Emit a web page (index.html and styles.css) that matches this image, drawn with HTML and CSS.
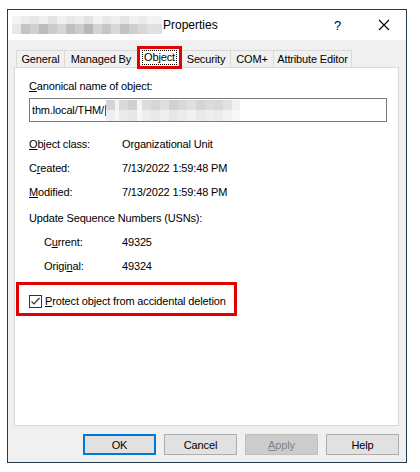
FILE: index.html
```html
<!DOCTYPE html>
<html lang="en">
<head>
    <meta charset="UTF-8">
    <title>Properties</title>
    <link rel="stylesheet" href="styles.css">
</head>
<body>

<div class="window">
    <div class="titlebar">
        <span class="blur-name"></span>
        <span class="title">Properties</span>
        <span class="help-btn">?</span>
        <span class="close-btn">
            <svg width="12" height="12" viewBox="0 0 12 12">
                <path d="M1 1 L11 11 M11 1 L1 11" stroke="#000" stroke-width="1.1" fill="none"/>
            </svg>
        </span>
    </div>

    <div class="client">
        <div class="tabs">
            <div class="tab tab-general">General</div>
            <div class="tab tab-managed">Managed By</div>
            <div class="tab tab-object active"><span class="focus">Object</span></div>
            <div class="tab tab-security">Security</div>
            <div class="tab tab-com">COM+</div>
            <div class="tab tab-attr">Attribute Editor</div>
        </div>

        <div class="panel">
            <div class="label-top"><u>C</u>anonical name of object:</div>
            <div class="textbox">
                <span>thm.local/THM/</span><span class="cursor-bit"></span><span class="blur-path"></span>
            </div>

            <div class="row">
                <span class="key"><u>O</u>bject class:</span>
                <span class="val">Organizational Unit</span>
            </div>
            <div class="row">
                <span class="key">C<u>r</u>eated:</span>
                <span class="val">7/13/2022 1:59:48 PM</span>
            </div>
            <div class="row">
                <span class="key"><u>M</u>odified:</span>
                <span class="val">7/13/2022 1:59:48 PM</span>
            </div>
            <div class="row usn">Update Sequence Numbers (USNs):</div>
            <div class="row sub">
                <span class="key">C<u>u</u>rrent:</span>
                <span class="val">49325</span>
            </div>
            <div class="row sub">
                <span class="key">Origi<u>n</u>al:</span>
                <span class="val">49324</span>
            </div>

            <div class="protect">
                <span class="checkbox">
                    <svg width="11" height="11" viewBox="0 0 11 11">
                        <path d="M1.5 5.5 L4 8 L9.5 2" stroke="#333" stroke-width="1.2" fill="none"/>
                    </svg>
                </span>
                <span><u>P</u>rotect object from accidental deletion</span>
            </div>
        </div>

        <div class="buttons">
            <button class="btn default">OK</button>
            <button class="btn">Cancel</button>
            <button class="btn disabled"><u>A</u>pply</button>
            <button class="btn">Help</button>
        </div>
    </div>
</div>

</body>
</html>
```

FILE: styles.css
```css
* {
    box-sizing: border-box;
}

body {
    margin: 0;
    background: #fff;
    font-family: "Liberation Sans", Arial, sans-serif;
    font-size: 11px;
    letter-spacing: -0.15px;
    color: #000;
}

u {
    text-decoration: underline;
    text-underline-offset: 1px;
}

.window {
    margin: 9px 0 0 7px;
    width: 400px;
    height: 454px;
    border: 1px solid #243a4e;
    display: flex;
    flex-direction: column;
}

.titlebar {
    height: 30px;
    background: #fff;
    display: flex;
    align-items: center;
}

.blur-name {
    margin-left: 4px;
    width: 150px;
    height: 18px;
    background:
        linear-gradient(90deg, #f4f4f4 0 9px, #ececec 9px 18px, #e6e6e6 18px 27px, #efefef 27px 36px,
            #e4e4e4 36px 45px, #f0f0f0 45px 54px, #e8e8e8 54px 63px, #ededed 63px 72px,
            #e3e3e3 72px 81px, #f2f2f2 81px 90px, #e9e9e9 90px 99px, #eeeeee 99px 108px,
            #e5e5e5 108px 117px, #f1f1f1 117px 126px, #ebebeb 126px 135px, #f3f3f3 135px 150px) top / 100% 8px no-repeat,
        linear-gradient(90deg, #e8e8e8 0 9px, #c4c4c4 9px 18px, #d0d0d0 18px 27px, #bcbcbc 27px 36px,
            #cbcbcb 36px 45px, #d6d6d6 45px 54px, #c0c0c0 54px 63px, #cdcdcd 63px 72px,
            #b8b8b8 72px 81px, #d3d3d3 81px 90px, #c6c6c6 90px 99px, #d9d9d9 99px 108px,
            #c2c2c2 108px 117px, #cfcfcf 117px 126px, #d8d8d8 126px 135px, #e0e0e0 135px 150px) bottom / 100% 10px no-repeat;
}

.title {
    font-size: 12px;
    letter-spacing: 0;
    margin-left: 1px;
    flex: 1;
}

.help-btn {
    font-size: 13px;
    width: 20px;
    margin-right: 24px;
}

.close-btn {
    width: 12px;
    height: 12px;
    margin-right: 16px;
    display: flex;
}

.client {
    flex: 1;
    background: #f0f0f0;
    padding: 6px 7px 0 8px;
}

/* tab strip */
.tabs {
    display: flex;
    align-items: flex-end;
    height: 21px;
}

.tab {
    height: 17px;
    line-height: 16px;
    border: 1px solid #d9d9d9;
    border-bottom: none;
    margin-left: -1px;
    text-align: center;
    background: #f0f0f0;
}

.tab-general { margin-left: 0; width: 49px; }
.tab-managed { width: 74px; }
.tab-security { width: 50px; }
.tab-com { width: 44px; }
.tab-attr { width: 79px; }

.tab.active {
    width: 45px;
    height: 23px;
    margin-bottom: -2px;
    border: 3px solid #e50000;
    background: #fff;
    position: relative;
    z-index: 1;
    line-height: 14px;
    padding-top: 1px;
}

.focus {
    display: inline-block;
    border: 1px dotted #000;
    padding: 0 1px;
    line-height: 13px;
}

.panel {
    margin-left: -2px;
    width: 385px;
    height: 359px;
    background: #fff;
    border: 1px solid #d9d9d9;
    padding: 11px 12px 0 14px;
}

.label-top {
    line-height: 14px;
}

.textbox {
    margin-top: 5px;
    width: 358px;
    height: 24px;
    border: 1px solid #7a7a7a;
    display: flex;
    align-items: center;
    padding-left: 2px;
}

.cursor-bit {
    width: 1px;
    height: 11px;
    background: #555;
    margin-left: 1px;
}

.blur-path {
    width: 134px;
    height: 21px;
    background:
        linear-gradient(90deg, #d4d4d4 0 9px, #f3f3f3 9px 13px, #dadada 13px 22px, #d0d0d0 22px 31px,
            #f5f5f5 31px 36px, #dcdcdc 36px 45px, #d6d6d6 45px 54px, #dfdfdf 54px 63px,
            #d2d2d2 63px 72px, #d9d9d9 72px 81px, #e0e0e0 81px 90px, #d5d5d5 90px 99px,
            #dbdbdb 99px 108px, #d8d8d8 108px 117px, #e2e2e2 117px 126px, #f0f0f0 126px 134px) top / 100% 10px no-repeat,
        linear-gradient(90deg, #eeeeee 0 9px, #f6f6f6 9px 13px, #ebebeb 13px 22px, #e8e8e8 22px 31px,
            #f7f7f7 31px 36px, #ededed 36px 45px, #e9e9e9 45px 54px, #efefef 54px 63px,
            #e7e7e7 63px 72px, #ececec 72px 81px, #f1f1f1 81px 90px, #eaeaea 90px 99px,
            #eeeeee 99px 108px, #ebebeb 108px 117px, #f2f2f2 117px 126px, #f8f8f8 126px 134px) bottom / 100% 11px no-repeat;
}

.row {
    display: flex;
    height: 24px;
    line-height: 24px;
}

.textbox + .row {
    margin-top: 10px;
}

.key {
    width: 93px;
}

.row.usn {
    margin-top: 2px;
}

.row.sub .key {
    width: 78px;
    margin-left: 15px;
}

/* checkbox row, boxed in red */
.protect {
    margin: 4px 0 0 -13px;
    width: 221px;
    height: 34px;
    border: 3px solid #e50000;
    display: flex;
    align-items: center;
    padding: 4px 0 0 10px;
    gap: 3px;
}

.checkbox {
    width: 13px;
    height: 13px;
    border: 1px solid #333;
    background: #fff;
    display: flex;
    align-items: center;
    justify-content: center;
}

.buttons {
    display: flex;
    justify-content: flex-end;
    gap: 8px;
    margin-top: 8px;
}

.btn {
    width: 73px;
    height: 21px;
    font-family: "Liberation Sans", Arial, sans-serif;
    font-size: 11px;
    letter-spacing: -0.15px;
    color: #000;
    background: #e1e1e1;
    border: 1px solid #adadad;
    padding: 0;
}

.btn.default {
    border: 2px solid #0078d7;
}

.btn.disabled {
    background: #cccccc;
    border-color: #bfbfbf;
    color: #838383;
}
```
